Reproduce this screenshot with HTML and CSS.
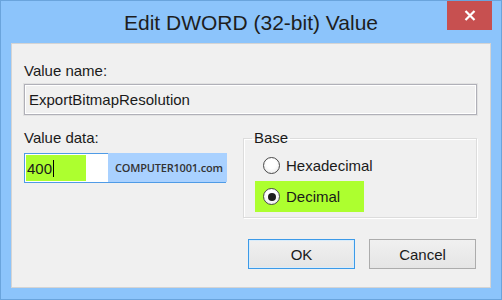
FILE: index.html
```html
<!DOCTYPE html>
<html lang="en">
<head>
    <meta charset="UTF-8">
    <title>Edit DWORD (32-bit) Value</title>
    <link rel="stylesheet" href="styles.css">
</head>
<body>
<div class="window">
    <div class="titlebar">
        <span></span>
        <h1 class="title">Edit DWORD (32-bit) Value</h1>
        <button class="close-btn" aria-label="Close">
            <svg width="12" height="11" viewBox="0 0 12 11"><path d="M1.5 1 L10.5 10 M10.5 1 L1.5 10" stroke="#fff" stroke-width="2.2" fill="none"/></svg>
        </button>
    </div>

    <div class="client">
        <div class="field-label">Value name:</div>
        <div class="textbox readonly">ExportBitmapResolution</div>

        <div class="data-row">
            <div class="data-col">
                <div class="field-label">Value data:</div>
                <div class="textbox focused">
                    <span class="marker">400<span class="caret"></span></span>
                    <span class="watermark">COMPUTER1001.com</span>
                </div>
            </div>
            <fieldset class="base-group">
                <legend>Base</legend>
                <label class="radio"><span class="radio-dot"></span>Hexadecimal</label>
                <label class="radio checked marker-row"><span class="radio-dot"></span>Decimal</label>
            </fieldset>
        </div>

        <div class="buttons">
            <button class="btn default">OK</button>
            <button class="btn">Cancel</button>
        </div>
    </div>
</div>
</body>
</html>
```

FILE: styles.css
```css
* {
    margin: 0;
    padding: 0;
    box-sizing: border-box;
}
body {
    font-family: 'Liberation Sans', Arial, sans-serif;
    font-size: 15px;
    line-height: 18px;
    color: #1a1a1a;
    background: #8cc4fb;
}
.window {
    width: 502px;
    height: 300px;
    background: #8cc4fb;
    border: 1px solid #6aa4dc;
    display: flex;
    flex-direction: column;
    padding: 0 10px 11px 10px;
}
.titlebar {
    height: 42px;
    display: grid;
    grid-template-columns: 1fr auto 1fr;
    margin: 0 -10px;
}
.title {
    font-size: 21px;
    font-weight: normal;
    line-height: 24px;
    color: #1e1e1e;
    margin-top: 10px;
    white-space: nowrap;
}
.close-btn {
    justify-self: end;
    align-self: start;
    width: 45px;
    height: 29px;
    margin-right: 9px;
    border: none;
    background: #c75050;
    display: flex;
    align-items: center;
    justify-content: center;
}
.client {
    flex: 1;
    background: #f0f0f0;
    border: 1px solid #d4d4d4;
    padding: 18px 13px 0 12px;
}
.field-label {
    height: 18px;
}
.textbox {
    margin-top: 4px;
    height: 31px;
    border: 1px solid #b0b0b8;
    box-shadow: 0 0 0 1px #e2e2e2, inset 0 0 0 1px #fff;
    padding: 6px 4px 0 4px;
    white-space: nowrap;
}
.textbox.readonly {
    background: #f0f0f0;
}
.data-row {
    margin-top: 14px;
    display: flex;
    justify-content: space-between;
}
.data-col {
    width: 202px;
}
.textbox.focused {
    margin-top: 6px;
    height: 30px;
    background: #fff;
    border-color: #4f9be6;
    box-shadow: none;
    padding: 1px;
    display: flex;
}
.marker {
    width: 60px;
    height: 26px;
    background: #adff2f;
    padding: 5px 0 0 1px;
    display: flex;
    align-items: flex-start;
}
.caret {
    width: 1px;
    height: 17px;
    background: #000;
    margin-left: 1px;
}
.watermark {
    margin: -2px -3px -1px auto;
    width: 119px;
    background: #a9d1ff;
    font-family: 'Open Sans', sans-serif;
    font-size: 11px;
    font-weight: 600;
    letter-spacing: -0.2px;
    color: #333;
    padding: 6px 0 0 7px;
}
.base-group {
    width: 234px;
    height: 89px;
    border: 1px solid #dcdcdc;
    box-shadow: inset 1px 1px 0 #fff, 1px 1px 0 #fff;
    padding: 3px 0 0 11px;
    min-inline-size: 0;
}
.base-group legend {
    padding: 0 2px;
    margin-left: -3px;
    line-height: 18px;
}
.radio {
    width: 109px;
    height: 31px;
    display: flex;
    align-items: center;
    padding-left: 8px;
    gap: 6px;
}
.marker-row {
    background: #adff2f;
}
.radio-dot {
    flex-shrink: 0;
    width: 17px;
    height: 17px;
    border-radius: 50%;
    border: 1px solid #4a4a4a;
    background: radial-gradient(circle at 50% 40%, #ffffff 40%, #e2e2e2 100%);
    display: flex;
    align-items: center;
    justify-content: center;
}
.checked .radio-dot::after {
    content: "";
    width: 8px;
    height: 8px;
    border-radius: 50%;
    background: #1e1e1e;
}
.buttons {
    margin-top: 21px;
    display: flex;
    justify-content: flex-end;
    gap: 14px;
    padding-right: 1px;
}
.btn {
    width: 107px;
    height: 30px;
    font-family: 'Liberation Sans', Arial, sans-serif;
    font-size: 15px;
    color: #1a1a1a;
    border: 1px solid #acacac;
    background: linear-gradient(to bottom, #f0f0f0, #e5e5e5);
}
.btn.default {
    border-color: #3c9ae8;
    box-shadow: inset 0 0 0 1px #d8ecfb;
}
```
